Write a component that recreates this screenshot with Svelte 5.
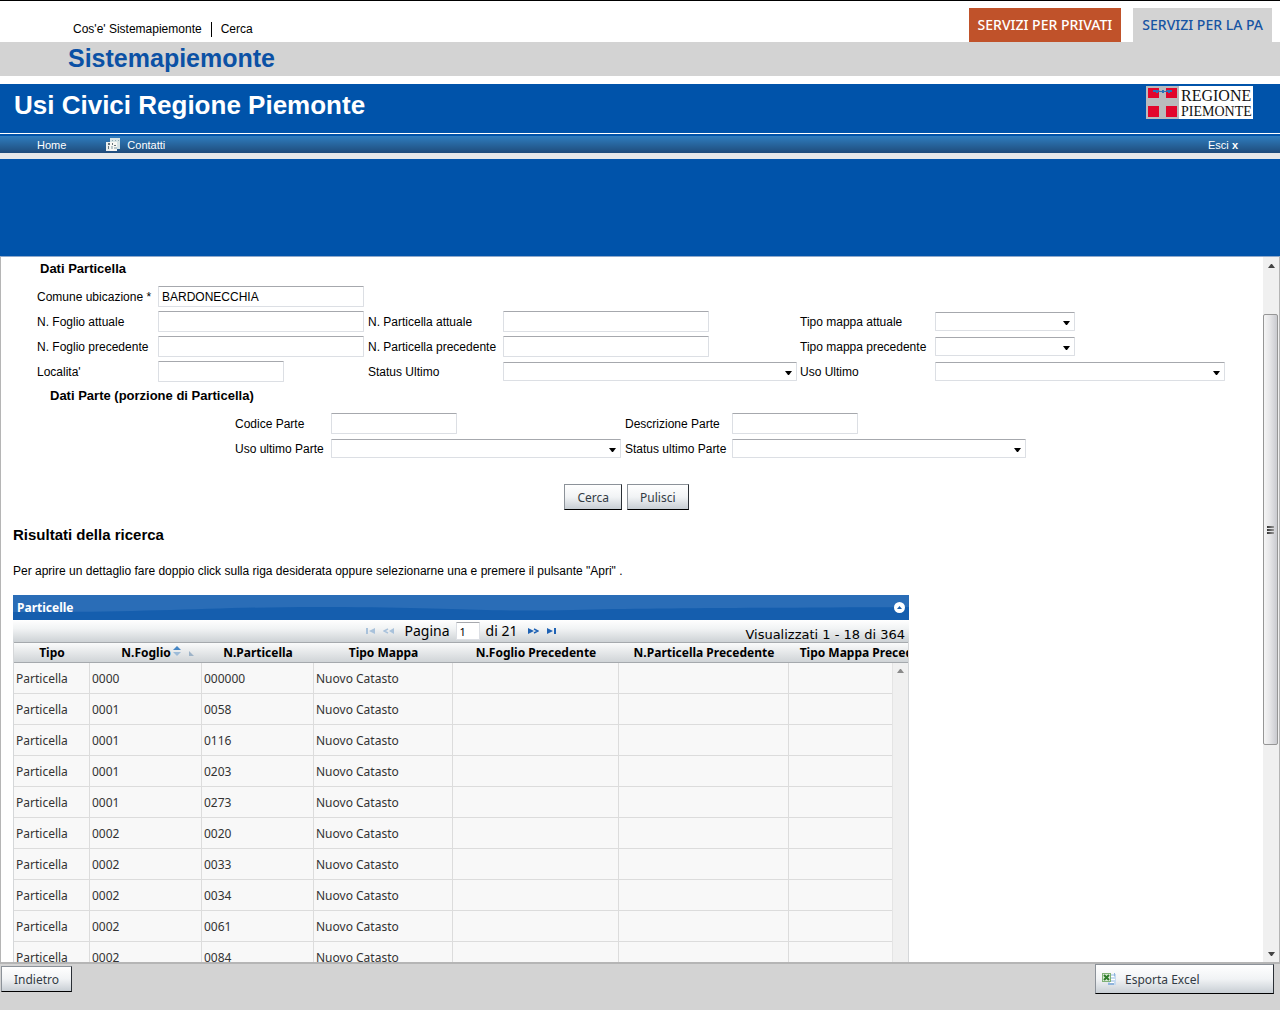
<script lang="ts">
  // Search form
  let comune = $state('BARDONECCHIA');
  let page = $state('1');
  let collapsed = $state(false);

  const columns = [
    { title: 'Tipo', width: 76 },
    { title: 'N.Foglio', width: 112, sorted: true },
    { title: 'N.Particella', width: 112 },
    { title: 'Tipo Mappa', width: 139 },
    { title: 'N.Foglio Precedente', width: 166 },
    { title: 'N.Particella Precedente', width: 170 },
    { title: 'Tipo Mappa Precedente', width: 162 },
  ];

  const rows = [
    ['0000', '000000'],
    ['0001', '0058'],
    ['0001', '0116'],
    ['0001', '0203'],
    ['0001', '0273'],
    ['0002', '0020'],
    ['0002', '0033'],
    ['0002', '0034'],
    ['0002', '0061'],
    ['0002', '0084'],
  ];
</script>

<div class="app">
  <header>
    <div class="top">
      <nav class="links">
        <a href="#cose">Cos'e' Sistemapiemonte</a>
        <a href="#cerca">Cerca</a>
      </nav>
      <nav class="services">
        <a class="privati" href="#privati">SERVIZI PER PRIVATI</a>
        <a class="pa" href="#pa">SERVIZI PER LA PA</a>
      </nav>
    </div>
    <div class="brand">Sistemapiemonte</div>
    <div class="title">
      <h1>Usi Civici Regione Piemonte</h1>
      <svg class="logo" width="107" height="33" viewBox="0 0 107 33" role="img" aria-label="Regione Piemonte">
        <rect width="107" height="33" fill="#fff" />
        <rect width="33" height="33" fill="#b9bbbd" />
        <path d="M2 2h11v10H2zM20 2h11v10H20zM2 20h11v11H2zM20 20h11v11H20z" fill="#e2062c" />
        <path d="M7 4h5l2 1h2V4h2v1h2l1-1h5v2h-2v1h-2V6h-4v1h-2V6h-4v1h-2V6H7z" fill="#2c73b8" />
        <text class="regione" x="35" y="15">REGIONE</text>
        <text x="35" y="30">PIEMONTE</text>
      </svg>
    </div>
    <nav class="menu">
      <a href="#home">Home</a>
      <a class="contatti" href="#contatti">
        <svg width="14" height="13" viewBox="0 0 14 13">
          <path d="M4 0h10v11H4z" fill="#d5e3e6" />
          <path d="M0 4h4v9H0z" fill="#e9eeee" />
          <path d="M4 4h7v9H4z" fill="#f7f7f4" />
          <path d="M2 5h2v2H2zM2 8h1v3H2zM6 5h1v2H6zM8 7h2v1H8z" fill="#68757c" />
          <path d="M5 8h2v3H5zM8 9h3v2H8z" fill="#bac8cc" />
          <path d="M6 2h1v1H6zM9 2h1v1H9zM12 2h1v1h-1z" fill="#8eabb5" />
        </svg>
        Contatti
      </a>
      <a class="esci" href="#esci">Esci <b>x</b></a>
    </nav>
    <div class="banner"></div>
  </header>

  <div class="content">
    <main>
      <h2 class="section">Dati Particella</h2>
      <form onsubmit={(e) => e.preventDefault()}>
        <div class="fields main-fields">
          <label for="comune">Comune ubicazione *</label>
          <input id="comune" class="wide new-line" bind:value={comune} />

          <label for="foglio">N. Foglio attuale</label>
          <input id="foglio" class="wide" />
          <label for="particella">N. Particella attuale</label>
          <input id="particella" class="wide" />
          <label for="mappa">Tipo mappa attuale</label>
          <select id="mappa" class="short"><option></option></select>

          <label for="foglio-prec">N. Foglio precedente</label>
          <input id="foglio-prec" class="wide" />
          <label for="particella-prec">N. Particella precedente</label>
          <input id="particella-prec" class="wide" />
          <label for="mappa-prec">Tipo mappa precedente</label>
          <select id="mappa-prec" class="short"><option></option></select>

          <label for="localita">Localita'</label>
          <input id="localita" />
          <label for="status">Status Ultimo</label>
          <select id="status"><option></option></select>
          <label for="uso">Uso Ultimo</label>
          <select id="uso"><option></option></select>
        </div>

        <h2 class="section part">Dati Parte (porzione di Particella)</h2>
        <div class="fields part-fields">
          <label for="codice">Codice Parte</label>
          <input id="codice" />
          <label for="descrizione">Descrizione Parte</label>
          <input id="descrizione" />
          <label for="uso-parte">Uso ultimo Parte</label>
          <select id="uso-parte"><option></option></select>
          <label for="status-parte">Status ultimo Parte</label>
          <select id="status-parte"><option></option></select>
        </div>

        <div class="actions">
          <button class="btn" type="submit">Cerca</button>
          <button class="btn" type="reset">Pulisci</button>
        </div>
      </form>

      <h2 class="results">Risultati della ricerca</h2>
      <p class="hint">
        Per aprire un dettaglio fare doppio click sulla riga desiderata oppure selezionarne una e premere il pulsante "Apri" .
      </p>

      <section class="grid">
        <div class="caption">
          <svg class="wave" viewBox="0 0 896 25" preserveAspectRatio="none">
            <path d="M0 17C150 18 210 11 330 12S480 17 560 15 740 13 896 12V25H0z" />
          </svg>
          <span>Particelle</span>
          <button aria-label="Comprimi" onclick={() => (collapsed = !collapsed)}>
            <svg width="11" height="11" viewBox="0 0 11 11">
              <circle cx="5.5" cy="5.5" r="5.5" fill="#fff" />
              <path d="M3 7l2.5-3L8 7z" fill="#1b5fac" />
            </svg>
          </button>
        </div>

        <div class="pager">
          <div class="pages">
            <button aria-label="Prima pagina" disabled>
              <svg width="9" height="7" viewBox="0 0 9 7"><path d="M0 0h2v6H0zM9 0v6L3 3z" /></svg>
            </button>
            <button aria-label="Pagina precedente" disabled>
              <svg width="11" height="7" viewBox="0 0 11 7">
                <path d="M11 0v6L6 3z" />
                <path d="M5 1L1 3l4 2" fill="none" stroke="currentColor" stroke-width="1.5" />
              </svg>
            </button>
            <label for="page">Pagina</label>
            <input id="page" bind:value={page} />
            <span>di 21</span>
            <button class="next" aria-label="Pagina successiva">
              <svg width="11" height="7" viewBox="0 0 11 7">
                <path d="M0 0v6l6-3z" />
                <path d="M6 1l4 2-4 2" fill="none" stroke="currentColor" stroke-width="1.5" />
              </svg>
            </button>
            <button aria-label="Ultima pagina">
              <svg width="9" height="7" viewBox="0 0 9 7"><path d="M7 0h2v6H7zM0 0v6l6-3z" /></svg>
            </button>
          </div>
          <span class="count">Visualizzati 1 - 18 di 364</span>
        </div>

        {#if !collapsed}
          <div class="table-wrap">
            <table>
              <colgroup>
                {#each columns as col}
                  <col style="width: {col.width}px" />
                {/each}
              </colgroup>
              <thead>
                <tr>
                  {#each columns as col}
                    <th>
                      <span>
                        {col.title}
                        {#if col.sorted}
                          <svg class="sort" width="24" height="11" viewBox="0 0 24 11">
                            <path d="M0 4l4-4 4 4z" fill="#4586c4" />
                            <path d="M0 6h8l-4 4z" fill="#9dbbd8" />
                            <path d="M16 5l5 5h-5z" fill="#9db3c8" />
                          </svg>
                        {/if}
                      </span>
                    </th>
                  {/each}
                </tr>
              </thead>
              <tbody>
                {#each rows as [foglio, particella]}
                  <tr>
                    <td>Particella</td>
                    <td>{foglio}</td>
                    <td>{particella}</td>
                    <td>Nuovo Catasto</td>
                    <td></td>
                    <td></td>
                    <td></td>
                  </tr>
                {/each}
              </tbody>
            </table>
            <div class="grid-scroll">
              <svg width="7" height="4" viewBox="0 0 7 4"><path d="M0 4l3-4h1l3 4z" fill="#8a8a8a" /></svg>
            </div>
          </div>
        {/if}
      </section>
    </main>

    <div class="scrollbar">
      <svg width="7" height="4" viewBox="0 0 7 4"><path d="M0 4l3-4h1l3 4z" fill="#444" /></svg>
      <div class="track">
        <div class="thumb"><i></i><i></i><i></i></div>
      </div>
      <svg width="7" height="4" viewBox="0 0 7 4"><path d="M0 0h7L4 4H3z" fill="#444" /></svg>
    </div>
  </div>

  <footer>
    <button class="btn back">Indietro</button>
    <button class="btn excel">
      <svg width="14" height="14" viewBox="0 0 14 14">
        <path d="M6 2h8v11H6z" fill="#c5daf0" />
        <path d="M7 4h5v1H7zM8 7h5v1H8zM8 10h4v1H8z" fill="#fff" />
        <path d="M12 1h1v3h-1zM6 11h6v2H6z" fill="#8fb4dc" />
        <path d="M0 1h9v9H0z" fill="#80b176" />
        <path d="M1 2h7v7H1z" fill="#dcebd7" />
        <path d="M2 3l5 5M7 3L2 8" stroke="#2d7c29" stroke-width="2" />
      </svg>
      Esporta Excel
    </button>
  </footer>
</div>

<style>
  :global(body) {
    margin: 0;
    background: #fff;
    font-family: 'Liberation Sans', Arial, sans-serif;
    font-size: 12px;
    color: #000;
  }

  .app {
    display: flex;
    flex-direction: column;
    height: 100vh;
    box-sizing: border-box;
    overflow: hidden;
  }

  a {
    color: inherit;
    text-decoration: none;
  }

  header {
    flex: none;
  }

  /* Top links */
  .top {
    display: flex;
    justify-content: space-between;
    align-items: flex-end;
    height: 41px;
    border-top: 1px solid #000;
    padding: 0 8px 0 73px;
  }

  .links {
    display: flex;
    line-height: 15px;
    padding-bottom: 5px;
  }

  .links a + a {
    border-left: 1px solid #000;
    margin-left: 9px;
    padding-left: 9px;
  }

  .services {
    display: flex;
    gap: 12px;
    font: 500 14px/34px 'Noto Sans', sans-serif;
  }

  .services a {
    padding: 0 9px;
  }

  .privati {
    background: #c0522a;
    color: #fff;
  }

  .pa {
    background: #d3d3d3;
    color: #1754a3;
  }

  .brand {
    height: 34px;
    padding-left: 68px;
    background: #d3d3d3;
    color: #0b51a5;
    font-size: 25px;
    font-weight: bold;
    line-height: 33px;
  }

  .title {
    display: flex;
    justify-content: space-between;
    align-items: flex-start;
    height: 49px;
    margin-top: 8px;
    padding: 0 27px 0 14px;
    background: #0053aa;
    border-bottom: 1px solid #fff;
    color: #fff;
  }

  h1 {
    margin: 0;
    font-size: 26px;
    line-height: 42px;
  }

  .logo {
    margin-top: 2px;
  }

  .logo text {
    font-family: 'Liberation Serif', serif;
    font-size: 14px;
    fill: #111;
  }

  .logo .regione {
    font-size: 16px;
  }

  .menu {
    display: flex;
    align-items: center;
    height: 17px;
    padding: 0 42px 0 37px;
    background: linear-gradient(#2f7dbf, #1f4c7b);
    border-top: 2px solid #0053aa;
    border-bottom: 6px solid #e7e9ea;
    color: #fff;
    font-size: 11px;
  }

  .contatti {
    display: flex;
    align-items: center;
    gap: 7px;
    margin-left: 40px;
  }

  .esci {
    margin-left: auto;
  }

  .banner {
    height: 97px;
    background: #0053aa;
  }

  /* Scrolling content */
  .content {
    flex: 1;
    display: flex;
    min-height: 0;
    border: 1px solid #b5b5b5;
    border-top-color: #8fa9cb;
    border-bottom-width: 2px;
  }

  main {
    flex: 1;
    min-width: 0;
    overflow: hidden;
  }

  .section {
    margin: 0 0 7px 39px;
    padding-top: 3px;
    font-size: 13px;
    line-height: 17px;
  }

  .section.part {
    margin-left: 49px;
  }

  .fields {
    display: grid;
    align-items: center;
    justify-items: start;
    grid-auto-rows: 25px;
  }

  .main-fields {
    grid-template-columns: 121px 210px 135px 297px 135px auto;
    margin-left: 36px;
  }

  .new-line {
    grid-column: 2 / -1;
  }

  .part-fields {
    grid-template-columns: 96px 294px 107px auto;
    margin-left: 234px;
  }

  input,
  select {
    box-sizing: border-box;
    border: 1px solid #dcdfe4;
    border-top-color: #a6a8ad;
    border-radius: 1px;
    background: #fff;
    color: #000;
    font: 12px 'Liberation Sans', Arial, sans-serif;
  }

  .fields input {
    width: 126px;
    height: 21px;
    padding: 0 3px;
  }

  .fields input.wide {
    width: 206px;
  }

  .fields select {
    width: 294px;
    height: 19px;
    appearance: none;
    background: #fff url("data:image/svg+xml,%3Csvg xmlns='http://www.w3.org/2000/svg' width='7' height='4'%3E%3Cpath d='M0 0h7L4 4H3z'/%3E%3C/svg%3E") no-repeat right 4px top 8px;
  }

  .fields #uso,
  .fields #uso-parte {
    width: 290px;
  }

  .fields select.short {
    width: 140px;
  }

  .btn {
    height: 26px;
    padding: 0 12px;
    border: 1px solid #8c9299;
    border-right-color: #2b3036;
    border-bottom-color: #000;
    background: linear-gradient(#fff, #f1f3f5 50%, #c8ced4);
    color: #333b44;
    font: 12px 'Noto Sans', sans-serif;
  }

  .actions {
    display: flex;
    justify-content: center;
    gap: 5px;
    margin: 23px 11px 15px 0;
  }

  .results {
    margin: 0;
    padding-left: 12px;
    font-size: 15px;
    line-height: 20px;
  }

  .hint {
    margin: 18px 0 16px;
    padding-left: 12px;
    line-height: 16px;
  }

  /* Results grid */
  .grid {
    width: 896px;
    max-width: calc(100% - 24px);
    margin-left: 12px;
    font-family: 'Noto Sans', sans-serif;
  }

  .caption {
    position: relative;
    display: flex;
    justify-content: space-between;
    align-items: center;
    height: 25px;
    padding: 0 4px;
    background: #2a6db7;
    color: #fff;
    font-size: 12px;
    font-weight: bold;
    line-height: 23px;
  }

  .caption span,
  .caption button {
    position: relative;
  }

  .wave {
    position: absolute;
    left: 0;
    top: 0;
    width: 100%;
    height: 100%;
    fill: #155eae;
  }

  .caption button,
  .pager button {
    display: flex;
    padding: 0;
    border: 0;
    background: none;
  }

  .pager {
    position: relative;
    display: flex;
    justify-content: center;
    height: 22px;
    background: linear-gradient(#fff, #f1f3f4 40%, #cdd2d5);
    font-size: 14px;
    line-height: 24px;
  }

  .pages {
    display: flex;
    align-items: center;
    gap: 6px;
  }

  .pages button {
    padding: 0 1px;
    color: #1f62b4;
    fill: currentColor;
  }

  .pages button:disabled {
    color: #a9c2db;
  }

  .pages label {
    margin-left: 4px;
  }

  .pages input {
    width: 24px;
    height: 18px;
    padding: 0 3px;
    font: 11px 'Noto Sans', sans-serif;
  }

  .pages .next {
    margin-left: 4px;
  }

  .count {
    position: absolute;
    right: 4px;
    top: 3px;
    font-family: 'DejaVu Sans', Verdana, sans-serif;
    font-size: 13px;
  }

  .table-wrap {
    position: relative;
    overflow: hidden;
    box-sizing: border-box;
    border: solid #d5d7d9;
    border-width: 0 1px;
  }

  table {
    width: 937px;
    table-layout: fixed;
    border-collapse: separate;
    border-spacing: 0;
    font-size: 12px;
  }

  th {
    height: 19px;
    padding: 0;
    border: solid #a5a9ad;
    border-width: 1px 0;
    background: linear-gradient(#fafbfb, #d0d4d7);
    line-height: 18px;
    white-space: nowrap;
  }

  th span {
    position: relative;
  }

  .sort {
    position: absolute;
    left: calc(100% + 2px);
    top: 2px;
  }

  td {
    height: 30px;
    padding: 0 2px;
    border: solid #dcdcdc;
    border-width: 0 1px 1px 0;
    background: #f8f8f8;
    color: #333;
  }

  .grid-scroll {
    position: absolute;
    top: 21px;
    right: 0;
    bottom: 0;
    width: 15px;
    background: #f0f0f0;
    line-height: 12px;
    text-align: center;
    border-left: 1px solid #e4e4e4;
  }

  /* Page scrollbar */
  .scrollbar {
    flex: none;
    display: flex;
    flex-direction: column;
    align-items: center;
    width: 16px;
    padding: 7px 0 6px;
    box-sizing: border-box;
    background: #f0f0f0;
  }

  .track {
    flex: 1;
    display: flex;
    width: 16px;
    flex-direction: column;
    padding: 46px 0 207px;
    box-sizing: border-box;
  }

  .thumb {
    flex: 1;
    display: flex;
    flex-direction: column;
    align-items: center;
    justify-content: center;
    gap: 1px;
    margin-right: 1px;
    border: 1px solid #969696;
    border-radius: 2px;
    background: linear-gradient(90deg, #f5f5f5, #e6e6e8 45%, #c9cacf);
  }

  .thumb i {
    width: 7px;
    height: 2px;
    background: linear-gradient(90deg, #333, #999);
  }

  footer {
    flex: none;
    display: flex;
    justify-content: space-between;
    align-items: flex-start;
    height: 46px;
    padding: 0 6px 0 1px;
    background: #d3d3d3;
  }

  .back {
    margin-top: 2px;
  }

  .excel {
    display: flex;
    align-items: center;
    gap: 9px;
    width: 179px;
    height: 30px;
    padding: 0 6px;
  }
</style>
